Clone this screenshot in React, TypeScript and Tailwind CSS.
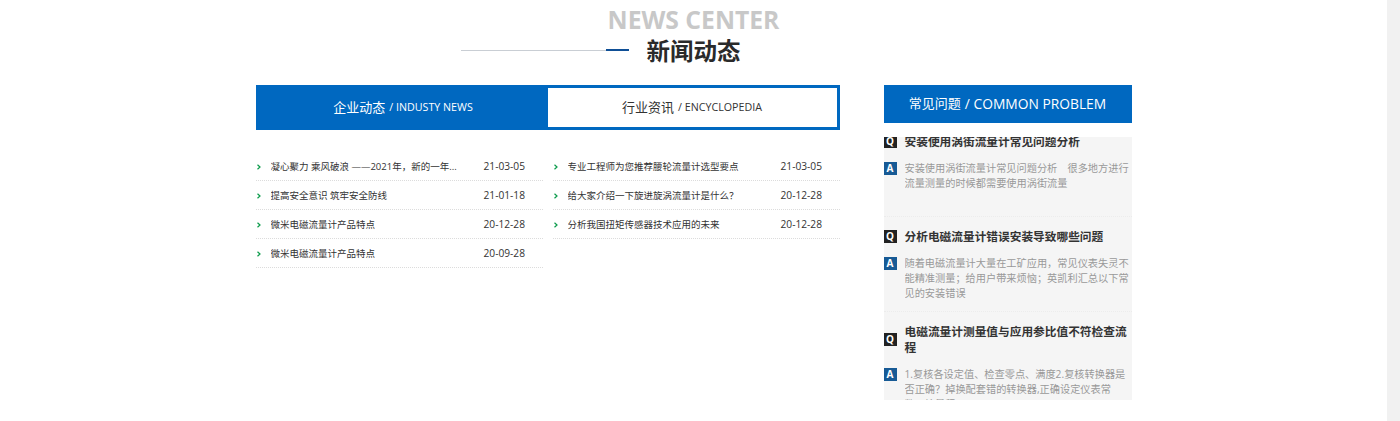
import React from 'react';

const leftNews = [
  { title: '凝心聚力 乘风破浪 ——2021年，新的一年...', date: '21-03-05' },
  { title: '提高安全意识 筑牢安全防线', date: '21-01-18' },
  { title: '微米电磁流量计产品特点', date: '20-12-28' },
  { title: '微米电磁流量计产品特点', date: '20-09-28' },
];

const rightNews = [
  { title: '专业工程师为您推荐腰轮流量计选型要点', date: '21-03-05' },
  { title: '给大家介绍一下旋进旋涡流量计是什么？', date: '20-12-28' },
  { title: '分析我国扭矩传感器技术应用的未来', date: '20-12-28' },
];

const faqs = [
  {
    q: '安装使用涡街流量计常见问题分析',
    a: '安装使用涡街流量计常见问题分析　很多地方进行流量测量的时候都需要使用涡街流量',
  },
  {
    q: '分析电磁流量计错误安装导致哪些问题',
    a: '随着电磁流量计大量在工矿应用，常见仪表失灵不能精准测量；给用户带来烦恼；英凯利汇总以下常见的安装错误',
  },
  {
    q: '电磁流量计测量值与应用参比值不符检查流程',
    a: '1.复核各设定值、检查零点、满度2.复核转换器是否正确？掉换配套错的转换器,正确设定仪表常\n数、检量程',
  },
];

const NewsList = ({ items }: { items: { title: string; date: string }[] }) => (
  <ul className="w-[287px]">
    {items.map((item, i) => (
      <li
        key={i}
        className="flex h-[29px] items-center border-b border-dotted border-[#dcdcdc] pt-[2px] text-[9.5px] text-[#333]"
      >
        <svg className="ml-[1px] h-[6px] w-[4px] shrink-0" viewBox="0 0 4 6" fill="none">
          <path d="M0.5 0.8 L3 3 L0.5 5.2" stroke="#0a9b4a" strokeWidth="1.2" />
        </svg>
        <span className="ml-[10px] w-[213px] truncate">{item.title}</span>
        <span className="text-[10.2px]">{item.date}</span>
      </li>
    ))}
  </ul>
);

const FaqItem = ({ q, a, last }: { q: string; a: string; last: boolean }) => (
  <div className={`pt-[11px] pb-[10px] ${last ? '' : 'border-b border-dotted border-[#ececec]'}`}>
    <div className="flex items-center">
      <span className="flex h-[13px] w-[13px] shrink-0 items-center justify-center bg-[#222] text-[10px] font-bold text-white">
        Q
      </span>
      <h4 className="ml-[8px] text-[11.7px] leading-[16px] font-bold text-[#333]">{q}</h4>
    </div>
    <div className="mt-[12px] flex items-start">
      <span className="mt-[1px] flex h-[13px] w-[13px] shrink-0 items-center justify-center bg-[#175a95] text-[10px] font-bold text-white">
        A
      </span>
      <p className="ml-[8px] h-[45px] overflow-hidden text-[10.2px] leading-[15px] whitespace-pre-line text-[#999]">
        {a}
      </p>
    </div>
  </div>
);

export default function App() {
  return (
    <div
      className="flex h-[421px] w-full overflow-hidden bg-white"
      style={{ fontFamily: '"Open Sans", "Noto Sans CJK SC", sans-serif' }}
    >
      <main className="flex-1">
        <div className="mx-auto w-[876px]">
          <header className="flex flex-col items-center pt-[4px]">
            <h2 className="text-[24.7px] leading-[32px] font-bold text-[#c8c8c8]">NEWS CENTER</h2>
            <div className="relative">
              <h3 className="text-[23.5px] leading-[30px] font-bold text-[#2a2a2a]">新闻动态</h3>
              <div className="absolute top-[13px] right-[112px] flex items-center">
                <span className="h-px w-[145px] bg-[#c9ced4]" />
                <span className="h-[2px] w-[23px] bg-[#0f4f96]" />
              </div>
            </div>
          </header>

          <div className="mt-[19px] flex justify-between">
            <section className="w-[584px]">
              <div className="flex h-[45px] border-[3px] border-[#0068c0] text-[13px]">
                <div className="flex w-[289px] items-center justify-center bg-[#0068c0] text-white">
                  企业动态<span className="ml-1 text-[10.7px]">/ INDUSTY NEWS</span>
                </div>
                <div className="flex flex-1 items-center justify-center bg-white text-[#333]">
                  行业资讯<span className="ml-1 text-[10.7px]">/ ENCYCLOPEDIA</span>
                </div>
              </div>
              <div className="mt-[22px] flex items-start gap-[10px]">
                <NewsList items={leftNews} />
                <NewsList items={rightNews} />
              </div>
            </section>

            <aside className="w-[248px]">
              <div className="flex h-[38px] items-center justify-center bg-[#0068c0] text-[13px] text-white">
                常见问题<span className="ml-1 text-[13.8px]">/ COMMON PROBLEM</span>
              </div>
              <div className="mt-[14px] h-[263px] overflow-hidden bg-[#f5f5f5]">
                <div className="-mt-[15px]">
                  {faqs.map((f, i) => (
                    <FaqItem key={i} q={f.q} a={f.a} last={i === faqs.length - 1} />
                  ))}
                </div>
              </div>
            </aside>
          </div>
        </div>
      </main>
      <div className="w-[13px] shrink-0 bg-[#f1f1f1]" />
    </div>
  );
}
